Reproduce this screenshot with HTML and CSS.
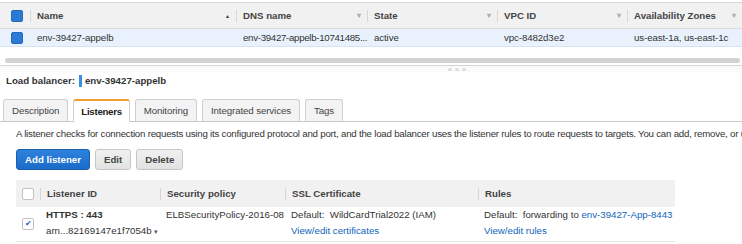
FILE: index.html
```html
<!DOCTYPE html>
<html lang="en">
<head>
    <meta charset="UTF-8"/>
    <title>Load Balancers</title>
    <link rel="stylesheet" href="styles.css">
</head>
<body>

<!-- ========== LOAD BALANCER LIST ========== -->
<table class="lb-grid">
    <colgroup>
        <col style="width:30px"><col style="width:206px"><col style="width:131px">
        <col style="width:130px"><col style="width:130px"><col style="width:115px">
    </colgroup>
    <thead>
    <tr>
        <th class="check-cell"><span class="box box-on"></span></th>
        <th><div class="th-inner">Name<span class="sort-up">&#9650;</span></div></th>
        <th><div class="th-inner">DNS name<span class="sort-down">&#9662;</span></div></th>
        <th><div class="th-inner">State<span class="sort-down">&#9662;</span></div></th>
        <th><div class="th-inner">VPC ID<span class="sort-down">&#9662;</span></div></th>
        <th><div class="th-inner">Availability Zones<span class="sort-down">&#9662;</span></div></th>
    </tr>
    </thead>
    <tbody>
    <tr class="selected">
        <td class="check-cell"><span class="box box-on"></span></td>
        <td>env-39427-appelb</td>
        <td class="dns">env-39427-appelb-10741485...</td>
        <td>active</td>
        <td>vpc-8482d3e2</td>
        <td>us-east-1a, us-east-1c</td>
    </tr>
    </tbody>
</table>

<div class="scrollbar"><div class="scroll-thumb"></div></div>
<div class="splitter"><span></span><span></span><span></span></div>

<!-- ========== DETAIL PANEL ========== -->
<div class="detail">
    <div class="detail-title">Load balancer: <span class="marker"></span>env-39427-appelb</div>

    <div class="tabs">
        <div class="tab">Description</div>
        <div class="tab active">Listeners</div>
        <div class="tab">Monitoring</div>
        <div class="tab">Integrated services</div>
        <div class="tab">Tags</div>
    </div>

    <p class="intro">A listener checks for connection requests using its configured protocol and port, and the load balancer uses the listener rules to route requests to targets. You can add, remove, or update listeners and edit their rules.</p>

    <div class="actions">
        <button class="btn btn-primary">Add listener</button>
        <button class="btn">Edit</button>
        <button class="btn">Delete</button>
    </div>

    <table class="listeners">
        <colgroup>
            <col style="width:24px"><col style="width:120px"><col style="width:125px">
            <col style="width:193px"><col style="width:197px">
        </colgroup>
        <thead>
        <tr>
            <th class="check-cell"><span class="box"></span></th>
            <th><div class="th-inner">Listener ID</div></th>
            <th><div class="th-inner">Security policy</div></th>
            <th><div class="th-inner">SSL Certificate</div></th>
            <th><div class="th-inner">Rules</div></th>
        </tr>
        </thead>
        <tbody>
        <tr>
            <td class="check-cell"><span class="box box-checked">&#10004;</span></td>
            <td><div class="line strong">HTTPS : 443</div><div class="line">arn...82169147e1f7054b <span class="caret">&#9662;</span></div></td>
            <td><div class="line">ELBSecurityPolicy-2016-08</div><div class="line">&nbsp;</div></td>
            <td><div class="line">Default:&nbsp; WildCardTrial2022 (IAM)</div><div class="line"><a href="#">View/edit certificates</a></div></td>
            <td><div class="line">Default:&nbsp; forwarding to <a href="#">env-39427-App-8443</a></div><div class="line"><a href="#">View/edit rules</a></div></td>
        </tr>
        </tbody>
    </table>
</div>

</body>
</html>
```

FILE: styles.css
```css
/* ========== GLOBAL ========== */
body {
  margin: 0;
  font-family: "Liberation Sans", Arial, sans-serif;
  font-size: 9.7px;
  color: #333;
  background: #fff;
  overflow: hidden;
  width: 742px;
}

a {
  color: #1166bb;
  text-decoration: none;
}

table {
  border-collapse: collapse;
  table-layout: fixed;
}

th {
  text-align: left;
  font-weight: bold;
  color: #444;
  padding: 0;
}

td {
  padding: 0;
  white-space: nowrap;
  overflow: hidden;
}

.th-inner {
  display: flex;
  align-items: center;
  justify-content: space-between;
  border-left: 1px solid #d6d6d6;
  padding: 0 6px 0 6px;
  height: 12px;
  white-space: nowrap;
}

/* ========== CHECKBOXES ========== */
.check-cell {
  text-align: center;
}
.box {
  display: inline-block;
  width: 10px;
  height: 10px;
  border: 1px solid #c4c4c4;
  border-radius: 2px;
  background: #fff;
  vertical-align: middle;
  box-sizing: content-box;
}
.box-on {
  background: #2b7bd6;
  border-color: #2468b8;
}
.box-checked {
  font-size: 8px;
  line-height: 10px;
  color: #1f63c6;
  text-align: center;
}

/* ========== LOAD BALANCER GRID ========== */
.lb-grid {
  width: 742px;
  margin-top: 2px;
  border-top: 1px solid #d8d8d8;
}
.lb-grid thead tr {
  background: #f1f1f1;
  height: 26px;
  border-bottom: 1px solid #dcdcdc;
}
.lb-grid th:first-child {
  padding-left: 4px;
}
.lb-grid td {
  padding-left: 7px;
  letter-spacing: -0.1px;
}
.lb-grid td.dns {
  padding-left: 7px;
  letter-spacing: -0.3px;
}
.lb-grid td.check-cell {
  padding-left: 4px;
}
.lb-grid tr.selected {
  background: #e9f2fc;
  height: 18px;
  border-bottom: 1px solid #d5e3f3;
}
.sort-up {
  font-size: 5px;
  color: #333;
}
.sort-down {
  font-size: 8px;
  color: #b0b0b0;
}

.scrollbar {
  margin-top: 11px;
  padding: 0 2px 0 5px;
}
.scroll-thumb {
  height: 5px;
  border-radius: 3px;
  background: #d3d3d3;
}

.splitter {
  margin-top: 2px;
  border-top: 1px solid #d4d4d4;
  background: #fafafa;
  height: 6px;
  display: flex;
  justify-content: center;
  align-items: center;
  gap: 3px;
  padding-left: 172px;
}
.splitter span {
  width: 4px;
  height: 3px;
  border-radius: 2px;
  background: #dedede;
}

/* ========== DETAIL PANEL ========== */
.detail-title {
  font-weight: bold;
  color: #333;
  padding: 1px 0 0 6px;
  height: 15px;
  display: flex;
  align-items: center;
}
.detail-title .marker {
  display: inline-block;
  width: 3px;
  height: 12px;
  background: #3d8fe0;
  margin: 0 3px 0 4px;
}

.tabs {
  display: flex;
  gap: 5px;
  margin-top: 11px;
  padding-left: 3px;
  border-bottom: 1px solid #c9c9c9;
  height: 22px;
}
.tab {
  display: flex;
  align-items: center;
  padding: 0 8px;
  background: #f3f3f3;
  border: 1px solid #cfcfcf;
  border-bottom: none;
  border-radius: 3px 3px 0 0;
  color: #444;
  letter-spacing: -0.1px;
}
.tab.active {
  background: #fff;
  border-top: 2px solid #f0a030;
  font-weight: bold;
  color: #222;
  margin-bottom: -1px;
  padding: 0 7px;
  letter-spacing: -0.3px;
}

.intro {
  margin: 5px 0 0 16px;
  white-space: nowrap;
  overflow: hidden;
  color: #333;
  line-height: 13px;
  letter-spacing: -0.22px;
}

.actions {
  display: flex;
  gap: 5px;
  margin: 9px 0 0 16px;
}
.btn {
  font-family: inherit;
  font-size: 9.7px;
  font-weight: bold;
  color: #444;
  height: 21px;
  padding: 0 8px;
  background: linear-gradient(#f0f0f0, #e2e2e2);
  border: 1px solid #c6c6c6;
  border-radius: 3px;
}
.btn-primary {
  color: #fff;
  background: linear-gradient(#2e82dc, #1a6bc9);
  border-color: #1a5fae;
}

/* ========== LISTENERS TABLE ========== */
.listeners {
  width: 659px;
  margin: 10px 0 0 16px;
}
.listeners thead tr {
  background: #f1f1f1;
  height: 27px;
}
.listeners tbody tr {
  height: 34px;
  border-bottom: 1px solid #e6e6e6;
}
.listeners td {
  padding-left: 6px;
  vertical-align: top;
}
.listeners td.check-cell {
  padding-left: 0;
  vertical-align: middle;
}
.listeners .line {
  height: 16px;
  line-height: 16px;
}
.strong {
  font-weight: bold;
}
.caret {
  font-size: 7px;
  color: #555;
}
```
